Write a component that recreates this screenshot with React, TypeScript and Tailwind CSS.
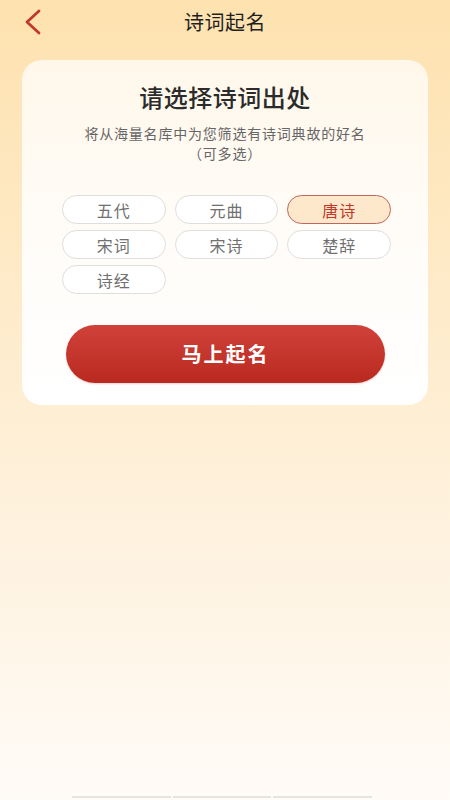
import { useState } from 'react';

const SOURCES = ['五代', '元曲', '唐诗', '宋词', '宋诗', '楚辞', '诗经'] as const;

export default function App() {
  const [selected, setSelected] = useState<string[]>(['唐诗']);

  const toggle = (name: string) =>
    setSelected((cur) => (cur.includes(name) ? cur.filter((n) => n !== name) : [...cur, name]));

  return (
    <div
      className="relative flex h-[800px] w-full flex-col overflow-hidden bg-gradient-to-b from-[#fee2af] via-[#feefd6] via-55% to-[#fffbf7]"
      style={{ fontFamily: '"Noto Sans CJK SC", "Noto Sans", sans-serif' }}
    >
      {/* Header */}
      <div className="relative flex h-[44px] items-center justify-center">
        <button className="absolute left-[22px] top-[8px] flex h-[28px] w-[22px] items-center justify-center">
          <svg width="18" height="26" viewBox="0 0 18 26" fill="none">
            <polyline
              points="15,2 3,13 15,24"
              stroke="#c0392b"
              strokeWidth="2.8"
              strokeLinecap="round"
              strokeLinejoin="round"
            />
          </svg>
        </button>
        <h1 className="text-[20px] font-normal tracking-[0.5px] text-[#1f1f1f]">诗词起名</h1>
      </div>

      {/* Card */}
      <div className="mx-[22px] mt-[16px] rounded-[20px] bg-gradient-to-b from-[#fff7ea] via-[#fffcf8] to-white pb-[22px] pt-[21px]">
        <h2 className="text-center text-[24px] font-medium leading-[32px] tracking-[0.5px] text-[#2b2b2b]">
          请选择诗词出处
        </h2>
        <p className="mt-[10px] text-center text-[14px] leading-[20px] tracking-[0.8px] text-[#666]">
          将从海量名库中为您筛选有诗词典故的好名
          <br />
          （可多选）
        </p>

        <div className="ml-[40px] mt-[32px] grid w-[329px] grid-cols-3 gap-x-[9px] gap-y-[6px]">
          {SOURCES.map((name) => {
            const on = selected.includes(name);
            return (
              <button
                key={name}
                onClick={() => toggle(name)}
                className={
                  on
                    ? 'h-[29px] rounded-full border-[1.5px] border-[#c0665c] bg-[#fde8cb] text-[16px] tracking-[1px] text-[#c0392b]'
                    : 'h-[29px] rounded-full border-[1.5px] border-[#e0dedb] bg-white text-[16px] tracking-[1px] text-[#707070]'
                }
              >
                {name}
              </button>
            );
          })}
        </div>

        <button className="ml-[44px] mt-[31px] flex h-[58px] w-[319px] items-center justify-center rounded-full bg-gradient-to-b from-[#d0413a] to-[#b9291f] text-[20px] font-semibold tracking-[2px] text-white shadow-[0_1px_2px_rgba(160,40,30,0.2)]">
          马上起名
        </button>
      </div>

      {/* Home indicator strip */}
      <div className="absolute bottom-[2px] left-[72px] flex h-[2px] w-[300px] gap-[2px]">
        <div className="flex-1 bg-[#e6e4e1]" />
        <div className="flex-1 bg-[#e6e4e1]" />
        <div className="flex-1 bg-[#e6e4e1]" />
      </div>
    </div>
  );
}
